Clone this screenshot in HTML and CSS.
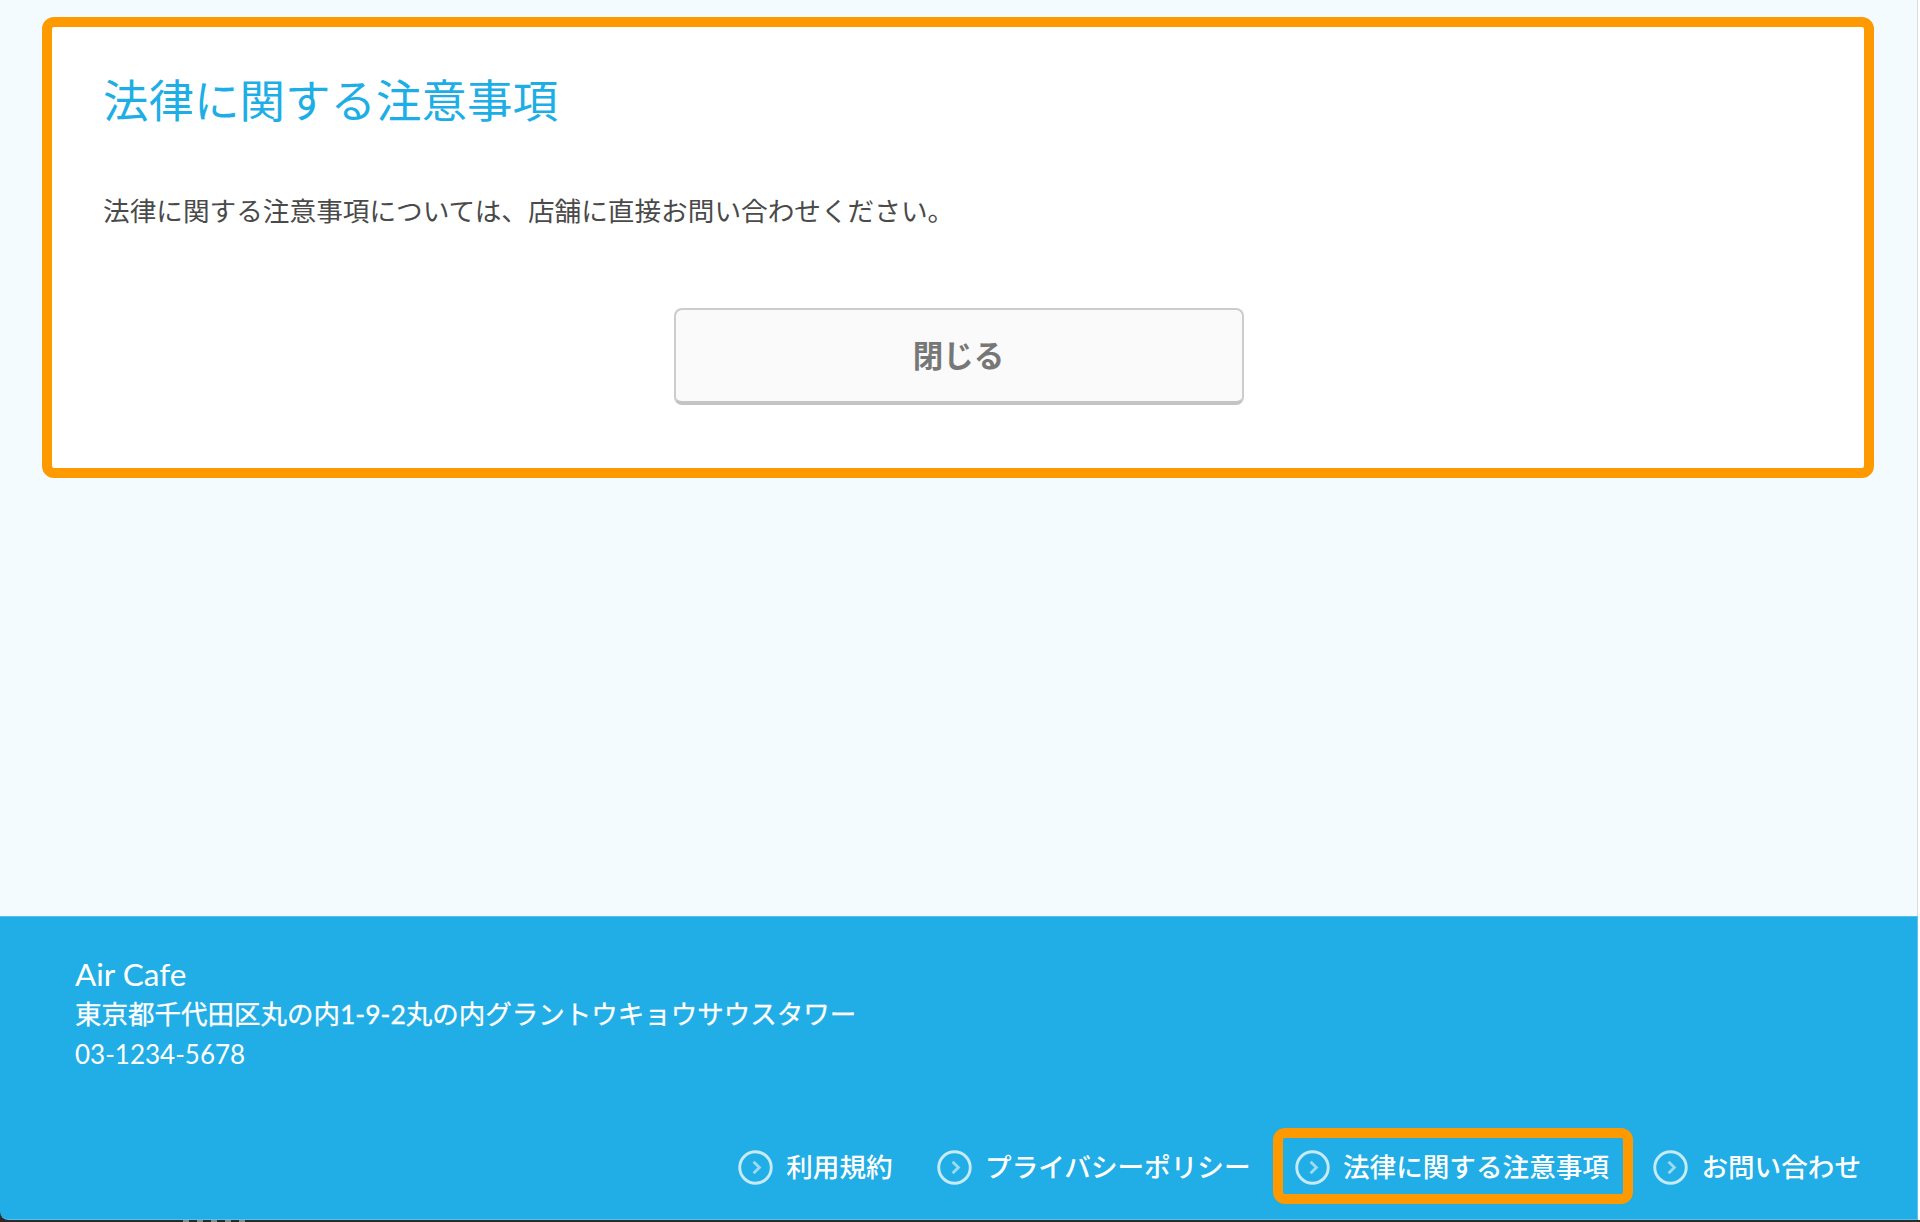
FILE: index.html
```html
<!DOCTYPE html>
<html lang="ja">
<head>
<meta charset="utf-8">
<title>法律に関する注意事項</title>
<link rel="stylesheet" href="styles.css">
</head>
<body>
<div class="window">
  <main class="main">
    <section class="notice">
      <h1 class="notice-title">法律に関する注意事項</h1>
      <p class="notice-text">法律に関する注意事項については、店舗に直接お問い合わせください。</p>
      <div class="notice-actions">
        <button class="close-button" type="button">閉じる</button>
      </div>
    </section>
  </main>
  <footer class="footer">
    <address class="shop">
      <div class="shop-name">Air Cafe</div>
      <div class="shop-line">東京都千代田区丸の内1-9-2丸の内グラントウキョウサウスタワー</div>
      <div class="shop-phone">03-1234-5678</div>
    </address>
    <nav class="links">
      <a class="link">
        <svg class="link-icon" viewBox="0 0 36 36"><circle class="ring" cx="18" cy="18" r="16.2"/><path class="chev" d="M16 12l6 6-6 6"/></svg>
        <span class="link-text">利用規約</span>
      </a>
      <a class="link">
        <svg class="link-icon" viewBox="0 0 36 36"><circle class="ring" cx="18" cy="18" r="16.2"/><path class="chev" d="M16 12l6 6-6 6"/></svg>
        <span class="link-text">プライバシーポリシー</span>
      </a>
      <a class="link link-marked">
        <svg class="link-icon" viewBox="0 0 36 36"><circle class="ring" cx="18" cy="18" r="16.2"/><path class="chev" d="M16 12l6 6-6 6"/></svg>
        <span class="link-text">法律に関する注意事項</span>
      </a>
      <a class="link">
        <svg class="link-icon" viewBox="0 0 36 36"><circle class="ring" cx="18" cy="18" r="16.2"/><path class="chev" d="M16 12l6 6-6 6"/></svg>
        <span class="link-text">お問い合わせ</span>
      </a>
    </nav>
  </footer>
</div>
<div class="under-edge"></div>
</body>
</html>
```
FILE: styles.css
```css
* { box-sizing: border-box; }
html, body { margin: 0; height: 100%; }
body {
  background: #2a2a2a;
  font-family: "Noto Sans CJK JP", "Noto Sans", sans-serif;
  overflow: hidden;
}
.window {
  width: 1920px;
  height: 1220px;
  display: flex;
  flex-direction: column;
  border-right: 2px solid #fff;
  border-radius: 0 0 0 8px;
  overflow: hidden;
}
.main {
  flex: 1;
  padding: 17px 43px 0 42px;
  background: #f3fbff;
  border-right: 1px solid #ddd;
}
.notice {
  height: 461px;
  background: #fff;
  border: 10px solid #ff9900;
  border-radius: 12px;
  padding: 38px 50px 0 51px;
}
.notice-title {
  margin: 0;
  font-size: 45.5px;
  line-height: 66px;
  font-weight: 400;
  color: #1eaee6;
}
.notice-text {
  margin: 59px 0 0;
  font-size: 26.65px;
  line-height: 40px;
  font-weight: 400;
  color: #4a4a4a;
}
.notice-actions {
  display: flex;
  justify-content: center;
  margin-top: 78px;
}
.close-button {
  width: 570px;
  height: 97px;
  padding: 0 0 4px;
  background: #fafafa;
  border: 2px solid #ccc;
  border-bottom-width: 4px;
  border-color: #ccc #ccc #c4c4c4;
  border-radius: 8px;
  font-family: inherit;
  font-size: 30.5px;
  font-weight: 700;
  color: #777;
}
.footer {
  height: 304px;
  background: #21ade5;
  color: #fff;
  display: flex;
  flex-direction: column;
  justify-content: space-between;
  padding: 37px 56px 0 75px;
  border: 1px solid #55c0ec;
  border-left: 0;
  border-right-color: #5cc4ee;
  border-radius: 0 0 0 8px;
}
.shop { font-style: normal; }
.shop-name {
  font-family: Lato, "Noto Sans CJK JP", sans-serif;
  font-size: 31.5px;
  font-weight: 400;
  line-height: 40px;
}
.shop-line {
  font-size: 26.5px;
  font-family: Lato, "Noto Sans CJK JP", sans-serif;
  font-weight: 400;
  line-height: 40px;
  -webkit-text-stroke: 0.3px #fff;
}
.shop-phone {
  font-family: Lato, "Noto Sans CJK JP", sans-serif;
  font-size: 26px;
  line-height: 40px;
}
.links {
  display: flex;
  justify-content: flex-end;
  gap: 44.5px;
  height: 70px;
}
.link {
  position: relative;
  display: flex;
  align-items: center;
  gap: 13px;
  height: 36px;
  font-size: 26.6px;
  font-weight: 500;
  white-space: nowrap;
}
.link-text { padding-bottom: 4px; }
.link-icon { width: 35px; height: 35px; flex: none; }
.ring { fill: none; stroke: rgba(255,255,255,.75); stroke-width: 3; }
.chev { fill: none; stroke: rgba(255,255,255,.55); stroke-width: 3; }
.link-marked::after {
  content: "";
  position: absolute;
  left: -22px;
  right: -24px;
  top: -21px;
  bottom: -19px;
  border: 10px solid #ff9900;
  border-radius: 12px;
}
.under-edge {
  position: absolute;
  left: 183px;
  top: 1220px;
  width: 62px;
  height: 2px;
  background: repeating-linear-gradient(90deg, #8a8a8a 0 6px, transparent 6px 14px);
}
```
